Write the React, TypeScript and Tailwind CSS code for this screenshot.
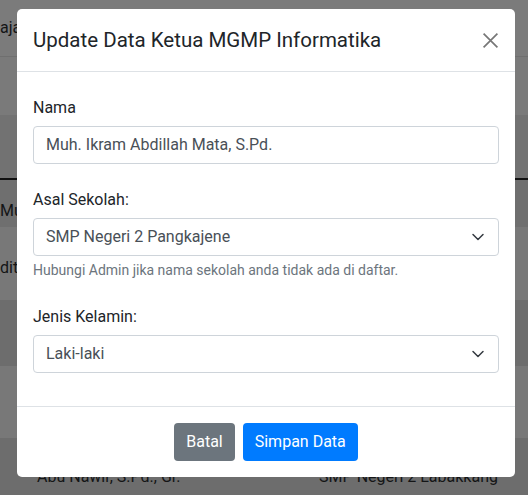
import { ReactNode } from "react";

const font = { fontFamily: 'Roboto, "Open Sans", sans-serif' };

const Chevron = function () {
  return (
    <svg width="16" height="16" viewBox="0 0 16 16" className="shrink-0">
      <path d="m3 5.5 5 5 5-5" fill="none" stroke="#343a40" strokeWidth="1.5" strokeLinecap="round" strokeLinejoin="round" />
    </svg>
  );
};

const Field = function ({ label, children }: { label: string; children: ReactNode }) {
  return (
    <div>
      <label className="block text-[16px] leading-6 text-[#212529] mb-1.5">{label}</label>
      {children}
    </div>
  );
};

const SelectBox = function ({ value }: { value: string }) {
  return (
    <div className="h-[38px] w-full rounded-[4px] border border-[#ced4da] bg-white flex items-center justify-between pl-3 pr-3 text-[16px] text-[#495057]">
      <span>{value}</span>
      <Chevron />
    </div>
  );
};

const App = function () {
  return (
    <div className="relative w-[528px] h-[495px] overflow-hidden text-[16px]" style={font}>
      {/* page behind the dialog */}
      <div className="flex flex-col text-[#141516]">
        <div className="h-[56px] bg-[#7b7b7b] flex items-center">ajar</div>
        <div className="h-px bg-[#6f6f6f]"></div>
        <div className="h-[58px] bg-[#7a7a7a]"></div>
        <div className="h-[63px] bg-[#727272]"></div>
        <div className="h-[2px] bg-[#111]"></div>
        <div className="h-[47px] bg-[#6f6f6f] flex items-end pb-[4px]">Muh.</div>
        <div className="h-[73px] bg-[#787878] flex items-end pb-[20px]">dit</div>
        <div className="h-[66px] bg-[#6d6d6d]"></div>
        <div className="h-[72px] bg-[#787878]"></div>
        <div className="h-[57px] bg-[#6d6d6d] flex items-end justify-between pl-[37px] pr-[30px] pb-[6px]">
          <span>Abu Nawir, S.Pd., Gr.</span>
          <span>SMP Negeri 2 Labakkang</span>
        </div>
      </div>

      {/* dialog */}
      <div className="absolute left-[17px] top-[9px] w-[498px] rounded-[5px] bg-white">
        <div className="flex items-center justify-between px-4 py-4 border-b border-[#dee2e6]">
          <h5 className="text-[20.5px] leading-[30px] text-[#212529]">Update Data Ketua MGMP Informatika</h5>
          <svg width="17" height="17" viewBox="0 0 16 16">
            <path d="M1.5 1.5 14.5 14.5M14.5 1.5 1.5 14.5" stroke="#777" strokeWidth="1.6" />
          </svg>
        </div>

        <div className="px-4 pt-6 pb-[33px] flex flex-col">
          <Field label="Nama">
            <div className="h-[38px] w-full rounded-[4px] border border-[#ced4da] flex items-center px-3 text-[#495057]">
              Muh. Ikram Abdillah Mata, S.Pd.
            </div>
          </Field>
          <div className="mt-6">
            <Field label="Asal Sekolah:">
              <SelectBox value="SMP Negeri 2 Pangkajene" />
              <p className="mt-1 text-[14px] leading-[21px] text-[#6c757d]">
                Hubungi Admin jika nama sekolah anda tidak ada di daftar.
              </p>
            </Field>
          </div>
          <div className="mt-6">
            <Field label="Jenis Kelamin:">
              <SelectBox value="Laki-laki" />
            </Field>
          </div>
        </div>

        <div className="flex justify-center gap-2 py-4 border-t border-[#dee2e6]">
          <button className="h-[38px] px-3 rounded-[4px] bg-[#6c757d] text-white">Batal</button>
          <button className="h-[38px] px-3 rounded-[4px] bg-[#007bff] text-white">Simpan Data</button>
        </div>
      </div>
    </div>
  );
};

export default App;
